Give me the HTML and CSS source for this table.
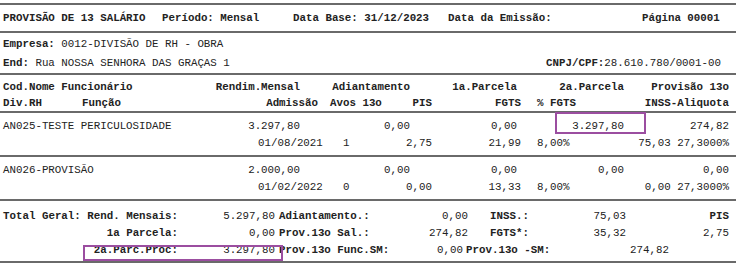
FILE: index.html
```html
<!DOCTYPE html>
<html lang="pt-BR">
<head>
    <meta charset="UTF-8">
    <meta name="viewport" content="width=device-width, initial-scale=1.0">
    <title>Provisão de 13 Salário</title>
    <link rel="stylesheet" href="styles.css">
</head>
<body>
    <div class="report">
        <div class="rule top"></div>

        <!-- Cabeçalho do relatório -->
        <div class="title-row">
            <span class="t1 b">PROVISÃO DE 13 SALÁRIO</span>
            <span class="t2 b">Período: Mensal</span>
            <span class="t3 b">Data Base: 31/12/2023</span>
            <span class="t4 b">Data da Emissão:</span>
            <span class="t5 b">Página 00001</span>
        </div>
        <div class="rule"></div>

        <div class="company">
            <div class="line"><span class="b">Empresa:</span> 0012-DIVISÃO DE RH - OBRA</div>
            <div class="line split">
                <span><span class="b">End:</span> Rua NOSSA SENHORA DAS GRAÇAS 1</span>
                <span><span class="b">CNPJ/CPF:</span>28.610.780/0001-00</span>
            </div>
        </div>
        <div class="rule"></div>

        <!-- Títulos das colunas -->
        <div class="head">
            <div class="row b">
                <span class="c-name">Cod.Nome Funcionário</span>
                <span class="c-rend">Rendim.Mensal</span>
                <span class="c-adi">Adiantamento</span>
                <span class="c-p1">1a.Parcela</span>
                <span class="c-p2">2a.Parcela</span>
                <span class="c-prov">Provisão 13o</span>
            </div>
            <div class="row b">
                <span class="c-div">Div.RH</span>
                <span class="c-func">Função</span>
                <span class="c-adm">Admissão</span>
                <span class="c-avos">Avos 13o</span>
                <span class="c-pis">PIS</span>
                <span class="c-fgts">FGTS</span>
                <span class="c-pfgts">% FGTS</span>
                <span class="c-inss">INSS-Aliquota</span>
            </div>
        </div>
        <div class="rule"></div>

        <div id="employees"></div>

        <!-- Totais -->
        <div class="totals">
            <div class="row">
                <span class="tl b">Total Geral: Rend. Mensais:</span>
                <span class="tv">5.297,80</span>
                <span class="tl2 b">Adiantamento.:</span>
                <span class="tv2">0,00</span>
                <span class="tl3 b">INSS.:</span>
                <span class="tv3">75,03</span>
                <span class="tv4 b">PIS</span>
            </div>
            <div class="row">
                <span class="tl b">1a Parcela:</span>
                <span class="tv">0,00</span>
                <span class="tl2 b">Prov.13o Sal.:</span>
                <span class="tv2">274,82</span>
                <span class="tl3 b">FGTS*:</span>
                <span class="tv3">35,32</span>
                <span class="tv4">2,75</span>
            </div>
            <div class="row">
                <span class="tl b">2a.Parc.Proc:</span>
                <span class="tv">3.297,80</span>
                <span class="tl2 b">Prov.13o Func.SM:</span>
                <span class="tv2b">0,00</span>
                <span class="tl3b b">Prov.13o -SM:</span>
                <span class="tv3b">274,82</span>
            </div>
        </div>
        <div class="rule"></div>

        <!-- Marcações -->
        <div class="mark mark-1"></div>
        <div class="mark mark-2"></div>
    </div>

    <script>
        // Dados dos funcionários
        const employees = [
            { name: 'AN025-TESTE PERICULOSIDADE', rend: '3.297,80', adi: '0,00', p1: '0,00', p2: '3.297,80', prov: '274,82',
              adm: '01/08/2021', avos: '1', pis: '2,75', fgts: '21,99', pfgts: '8,00%', inss: '75,03 27,3000%' },
            { name: 'AN026-PROVISÃO', rend: '2.000,00', adi: '0,00', p1: '0,00', p2: '0,00', prov: '0,00',
              adm: '01/02/2022', avos: '0', pis: '0,00', fgts: '13,33', pfgts: '8,00%', inss: '0,00 27,3000%' }
        ];

        function renderEmployees() {
            const box = document.getElementById('employees');
            box.innerHTML = '';
            employees.forEach(e => {
                const block = document.createElement('div');
                block.innerHTML = `
                    <div class="emp">
                        <div class="row">
                            <span class="c-name">${e.name}</span>
                            <span class="c-rend">${e.rend}</span>
                            <span class="c-adi">${e.adi}</span>
                            <span class="c-p1">${e.p1}</span>
                            <span class="c-p2">${e.p2}</span>
                            <span class="c-prov">${e.prov}</span>
                        </div>
                        <div class="row">
                            <span class="c-div"></span>
                            <span class="c-func"></span>
                            <span class="c-adm">${e.adm}</span>
                            <span class="c-avos val">${e.avos}</span>
                            <span class="c-pis">${e.pis}</span>
                            <span class="c-fgts">${e.fgts}</span>
                            <span class="c-pfgts">${e.pfgts}</span>
                            <span class="c-inss">${e.inss}</span>
                        </div>
                    </div>
                    <div class="rule"></div>
                `;
                box.appendChild(block);
            });
        }

        renderEmployees();
    </script>
</body>
</html>
```

FILE: styles.css
```css
body {
    margin: 0;
    padding: 0;
    background-color: #ffffff;
    font-family: "Liberation Mono", "Courier New", monospace;
    font-size: 10.8px;
    color: #222;
}

.report {
    position: relative;
    width: 736px;
    padding-top: 3px;
}

.b {
    font-weight: bold;
}

.rule {
    border-top: 2px solid #6a6a6a;
}

/* Cabeçalho */
.title-row {
    display: flex;
    align-items: center;
    height: 26px;
    padding-left: 3px;
    white-space: pre;
}

.t1 { width: 159px; }
.t2 { width: 131px; }
.t3 { width: 155px; }
.t4 { width: 194px; }

.company {
    padding: 2px 15px 0 3px;
    height: 38px;
}

.company .line {
    height: 19px;
    line-height: 19px;
    white-space: pre;
}

.split {
    display: flex;
    justify-content: space-between;
}

/* Linhas de colunas */
.row {
    display: flex;
    padding: 0 7px 0 3px;
    white-space: pre;
}

.head {
    padding: 4px 0 0;
    height: 32px;
}

.head .row {
    height: 16px;
    line-height: 16px;
}

.emp {
    padding: 5px 0 3px;
}

.emp .row {
    height: 17px;
    line-height: 17px;
}

.c-name { width: 207px; }
.c-rend { width: 90px; text-align: right; }
.c-adi { width: 110px; text-align: right; }
.c-p1 { width: 107px; text-align: right; }
.c-p2 { width: 107px; text-align: right; }
.c-prov { flex: 1; text-align: right; }

.c-div { width: 79px; }
.c-func { width: 176px; }
.c-adm { width: 60px; text-align: right; }
.c-avos { width: 60px; padding-left: 12px; }
.c-avos.val { padding-left: 25px; width: 47px; }
.c-pis { width: 42px; text-align: right; }
.c-fgts { width: 89px; text-align: right; }
.c-pfgts { width: 83px; padding-left: 16px; }
.c-inss { flex: 1; text-align: right; }

/* Totais */
.totals {
    padding: 7px 0 2px;
}

.totals .row {
    height: 17px;
    line-height: 17px;
}

.tl { width: 175px; text-align: right; }
.tv { width: 97px; text-align: right; }
.tl2 { width: 126px; padding-left: 4px; }
.tv2 { width: 63px; text-align: right; }
.tl3 { width: 78px; padding-left: 22px; }
.tv3 { width: 58px; text-align: right; }
.tv4 { flex: 1; text-align: right; }
.tv2b { width: 58px; text-align: right; }
.tl3b { width: 122px; padding-left: 3px; }
.tv3b { width: 81px; text-align: right; }

/* Marcações roxas */
.mark {
    position: absolute;
    border: 2px solid #9b4ea0;
}

.mark-1 {
    left: 555px;
    top: 112px;
    width: 87px;
    height: 18px;
}

.mark-2 {
    left: 83px;
    top: 245px;
    width: 196px;
    height: 12px;
}
```
